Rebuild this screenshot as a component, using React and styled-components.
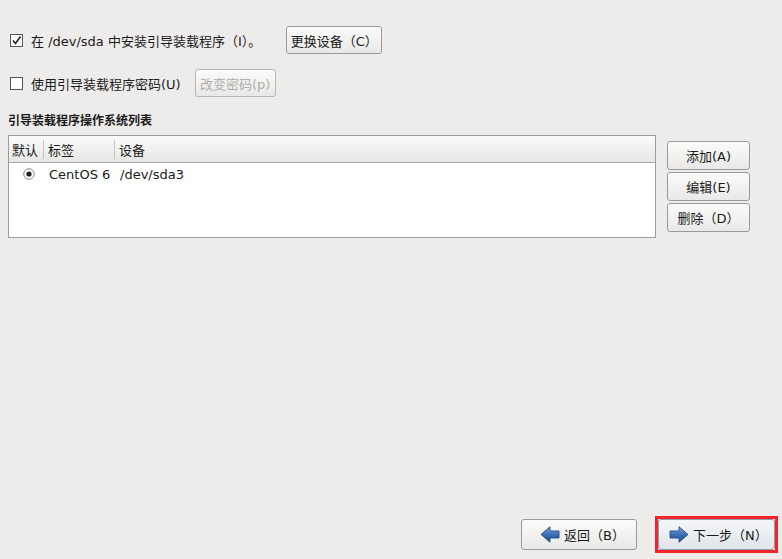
import React from "react";
import styled, { createGlobalStyle } from "styled-components";

const Global = createGlobalStyle`
  html, body { margin: 0; padding: 0; }
  body {
    background: #edeceb;
    font-family: "DejaVu Sans", "Noto Sans CJK SC", sans-serif;
    font-size: 13px;
    color: #1a1a1a;
  }
`;

const Page = styled.div`
  width: 782px;
  height: 559px;
  box-sizing: border-box;
  display: flex;
  flex-direction: column;
  padding: 26px 0 0 8px;
  overflow: hidden;
`;

const OptionRow = styled.div`
  display: flex;
  align-items: center;
  height: 28px;
  margin-bottom: ${(p) => p.$mb || 0}px;
`;

const Check = styled.span`
  width: 11px;
  height: 11px;
  border: 1px solid #555;
  background: #fff;
  margin-left: 2px;
  margin-right: 8px;
  display: inline-flex;
  align-items: center;
  justify-content: center;
  box-sizing: content-box;
`;

const Label = styled.span`
  white-space: nowrap;
  margin-right: ${(p) => p.$mr || 0}px;
`;

const Button = styled.button`
  font-family: "DejaVu Sans", "Noto Sans CJK SC", sans-serif;
  font-size: 13px;
  height: ${(p) => p.$h || 28}px;
  width: ${(p) => p.$w}px;
  padding: 0;
  border: 1px solid ${(p) => (p.$disabled ? "#b9b7b4" : "#9c9a97")};
  border-radius: 3px;
  background: linear-gradient(#fbfbfa, #e9e8e6);
  color: ${(p) => (p.$disabled ? "#b0aeab" : "#1a1a1a")};
  display: inline-flex;
  align-items: center;
  justify-content: center;
  box-sizing: border-box;
  white-space: nowrap;
`;

const Heading = styled.div`
  font-weight: bold;
  font-size: 12px;
  margin: 16px 0 6px 0;
  height: 16px;
  line-height: 16px;
`;

const ListArea = styled.div`
  display: flex;
  align-items: flex-start;
  gap: 11px;
`;

const Tree = styled.div`
  width: 648px;
  height: 103px;
  box-sizing: border-box;
  border: 1px solid #9d9c9a;
  background: #fff;
  display: flex;
  flex-direction: column;
`;

const HeaderRow = styled.div`
  display: grid;
  grid-template-columns: 34px 71px 1fr;
  height: 26px;
  background: linear-gradient(#fbfbfb, #e6e6e5);
  border-bottom: 1px solid #a9a8a6;
`;

const HeaderCell = styled.div`
  display: flex;
  align-items: center;
  border-left: ${(p) => (p.$first ? "none" : "1px solid #c4c3c1")};
  margin: ${(p) => (p.$first ? "0" : "4px 0")};
  padding-left: ${(p) => (p.$first ? 3 : 4)}px;
`;

const DataRow = styled.div`
  display: grid;
  grid-template-columns: 40px 71px 1fr;
  height: 22px;
  align-items: center;
`;

const Cell = styled.div`
  display: flex;
  align-items: center;
  justify-content: ${(p) => (p.$center ? "center" : "flex-start")};
  white-space: nowrap;
`;

const SideButtons = styled.div`
  display: flex;
  flex-direction: column;
  gap: 2px;
  padding-top: 6px;
`;

const Spacer = styled.div`
  flex: 1;
`;

const Footer = styled.div`
  display: flex;
  justify-content: flex-end;
  gap: 21px;
  padding-right: 7px;
  margin-bottom: 9px;
`;

const Highlight = styled.div`
  border: 3px solid #f0262b;
  margin: -3px;
  display: flex;
`;

const NavButton = styled(Button)`
  gap: 4px;
  justify-content: flex-start;
  padding-left: ${(p) => p.$pl || 18}px;
  background: ${(p) => (p.$focus ? "linear-gradient(#f4f6f9, #dfe4ea)" : "linear-gradient(#fbfbfa, #e9e8e6)")};
  border-color: ${(p) => (p.$focus ? "#8a9bb0" : "#9c9a97")};
`;

const Arrow = ({ dir }) => (
  <svg width="20" height="17" viewBox="0 0 20 17" style={{ transform: dir === "left" ? "scaleX(-1)" : "none" }}>
    <defs>
      <linearGradient id={"ag" + dir} x1="0" y1="0" x2="0" y2="1">
        <stop offset="0" stopColor="#7fa6d6" />
        <stop offset="0.5" stopColor="#3d70b4" />
        <stop offset="1" stopColor="#24508e" />
      </linearGradient>
    </defs>
    <path d="M1 5 H10 V0.8 L19 8.5 L10 16.2 V12 H1 Z" fill={"url(#ag" + dir + ")"} stroke="#234a80" strokeWidth="0.9" strokeLinejoin="round" />
  </svg>
);

const CheckMark = () => (
  <svg width="11" height="11" viewBox="0 0 11 11">
    <path d="M2 5.5 L4.5 8.5 L9.5 1.5" fill="none" stroke="#222" strokeWidth="1.6" />
  </svg>
);

const Radio = () => (
  <svg width="12" height="12" viewBox="0 0 12 12">
    <circle cx="6" cy="6" r="5.3" fill="#fbfbfb" stroke="#8d8b88" strokeWidth="1" />
    <circle cx="6" cy="6" r="2.6" fill="#222" />
  </svg>
);

export default function App() {
  return (
    <>
      <Global />
      <Page>
        <OptionRow $mb={15}>
          <Check><CheckMark /></Check>
          <Label $mr={25}>在 /dev/sda 中安装引导装载程序（I）。</Label>
          <Button $w={96}>更换设备（C）</Button>
        </OptionRow>
        <OptionRow>
          <Check />
          <Label $mr={14}>使用引导装载程序密码(U)</Label>
          <Button $w={81} $disabled disabled>改变密码(p)</Button>
        </OptionRow>
        <Heading>引导装载程序操作系统列表</Heading>
        <ListArea>
          <Tree>
            <HeaderRow>
              <HeaderCell $first>默认</HeaderCell>
              <HeaderCell>标签</HeaderCell>
              <HeaderCell>设备</HeaderCell>
            </HeaderRow>
            <DataRow>
              <Cell $center><Radio /></Cell>
              <Cell>CentOS 6</Cell>
              <Cell>/dev/sda3</Cell>
            </DataRow>
          </Tree>
          <SideButtons>
            <Button $w={83} $h={29}>添加(A)</Button>
            <Button $w={83} $h={29}>编辑(E)</Button>
            <Button $w={83} $h={29}>删除（D）</Button>
          </SideButtons>
        </ListArea>
        <Spacer />
        <Footer>
          <NavButton $w={116} $h={31} $pl={18}><Arrow dir="left" />返回（B）</NavButton>
          <Highlight>
            <NavButton $w={117} $h={31} $pl={10} $focus><Arrow dir="right" />下一步（N）</NavButton>
          </Highlight>
        </Footer>
      </Page>
    </>
  );
}
